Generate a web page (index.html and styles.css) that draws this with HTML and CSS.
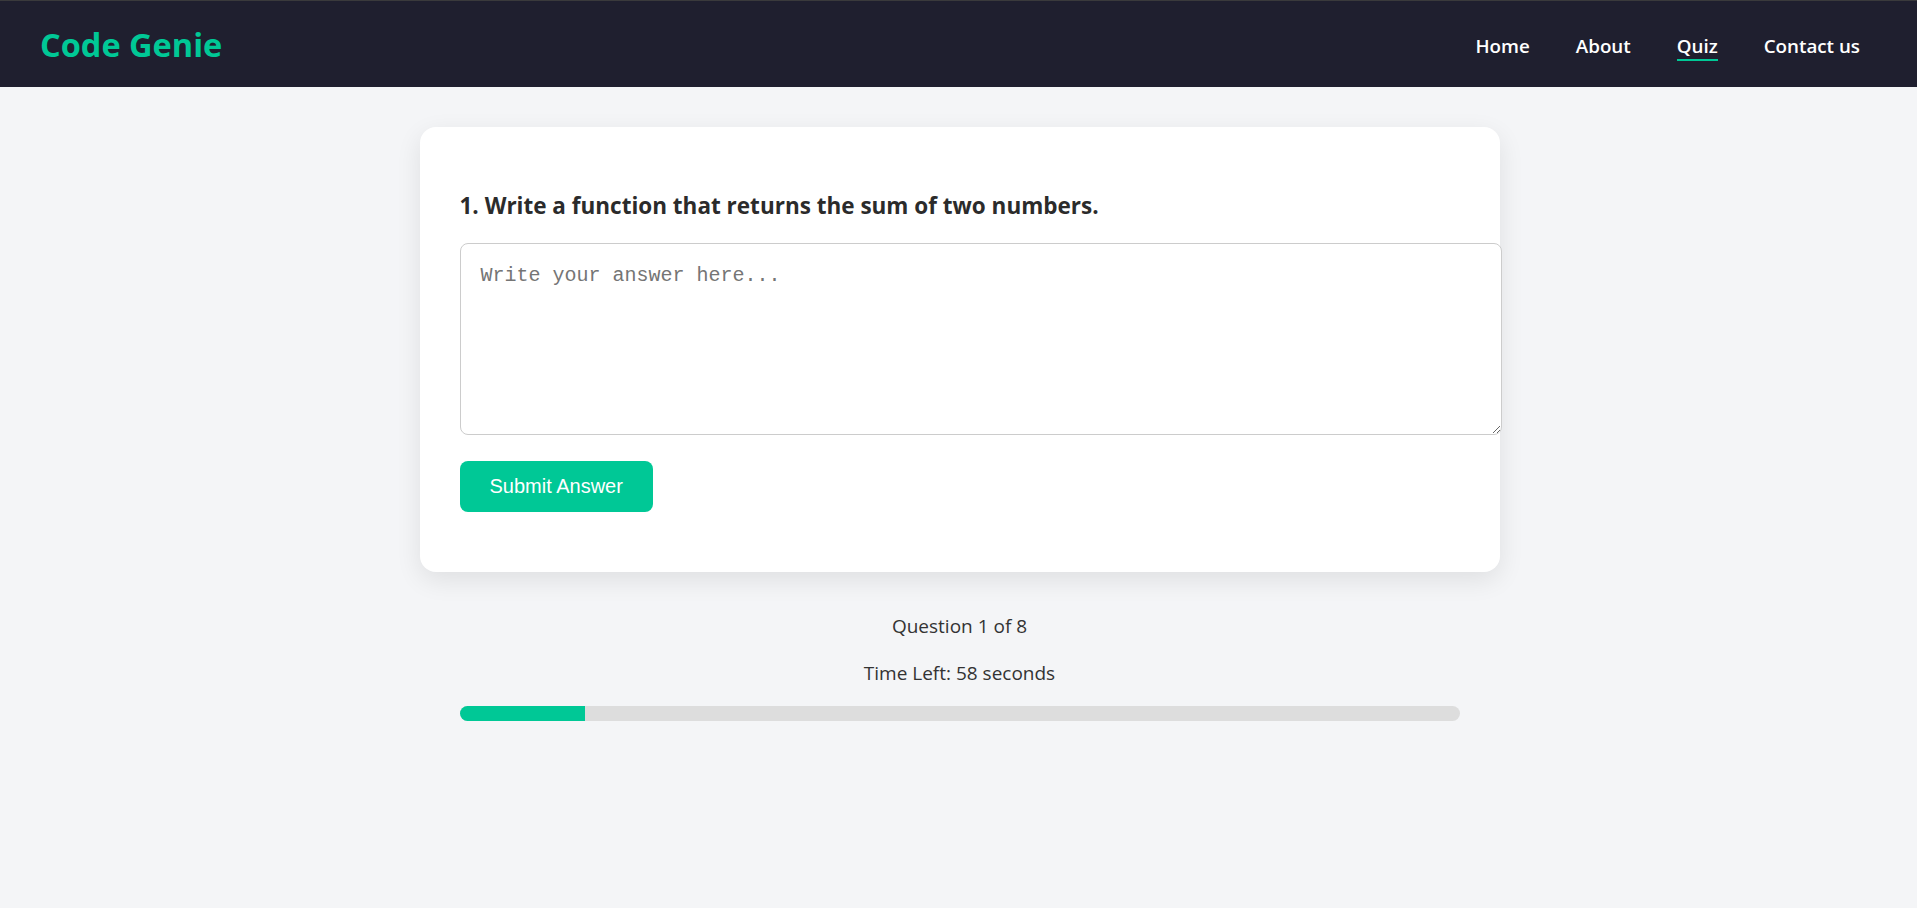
FILE: index.html
```html
<!DOCTYPE html>
<html lang="en">
<head>
<meta charset="utf-8">
<title>Code Genie - Quiz</title>
<link rel="stylesheet" href="styles.css">
</head>
<body>
<header class="navbar">
  <a class="logo" href="#">Code Genie</a>
  <nav class="nav-links">
    <a href="#">Home</a>
    <a href="#">About</a>
    <a href="#" class="active">Quiz</a>
    <a href="#">Contact us</a>
  </nav>
</header>
<main class="main">
  <section class="card">
    <h2 class="question">1. Write a function that returns the sum of two numbers.</h2>
    <textarea class="answer" placeholder="Write your answer here..."></textarea>
    <button class="submit" type="button">Submit Answer</button>
  </section>
  <div class="status">
    <p>Question 1 of 8</p>
    <p>Time Left: 58 seconds</p>
  </div>
  <div class="progress"><div class="progress-fill" style="width: 12.5%"></div></div>
</main>
</body>
</html>
```
FILE: styles.css
```css
* { box-sizing: content-box; }
body {
  margin: 0;
  background: #f4f5f7;
  font-family: "Open Sans", "Noto Sans", sans-serif;
  color: #333;
}
.navbar {
  height: 86px;
  border-top: 1px solid #3a3a3c;
  background: #1f1f2f;
  display: flex;
  align-items: center;
  justify-content: space-between;
  padding: 0 57px 0 40px;
}
.logo {
  color: #00c896;
  font-size: 32.5px;
  font-weight: 700;
  text-decoration: none;
}
.nav-links {
  display: flex;
  gap: 46px;
  padding-top: 5px;
}
.nav-links a {
  color: #fff;
  text-decoration: none;
  font-size: 18.8px;
  font-weight: 600;
  border-bottom: 2px solid transparent;
}
.nav-links a.active { border-bottom-color: #00c896; }
.main { padding: 40px 0 0 2px; }
.card {
  width: 1000px;
  margin: 0 auto;
  padding: 40px 40px 60px;
  background: #fff;
  border-radius: 16px;
  box-shadow: 0 8px 26px rgba(0, 0, 0, 0.09);
}
.question {
  font-size: 22.5px;
  font-weight: 700;
  color: #2b2b2b;
  margin: 23px 0 22px;
}
.answer {
  display: block;
  width: 100%;
  height: 150px;
  padding: 20px;
  border: 1px solid #ccc;
  border-radius: 8px;
  font-family: "Liberation Mono", monospace;
  font-size: 20px;
  margin: 0 0 26px;
  background: #fff;
}
.answer::placeholder { color: #757575; }
.submit {
  display: block;
  background: #00c896;
  color: #fff;
  border: none;
  border-radius: 8px;
  padding: 14px 30px;
  font-family: "Liberation Sans", Arial, sans-serif;
  font-size: 20px;
  line-height: 23px;
}
.status {
  text-align: center;
  margin-top: 41px;
  font-size: 19px;
}
.status p { margin: 0 0 21px; }
.status p:last-child { margin-bottom: 20px; }
.progress {
  width: 1000px;
  height: 15px;
  margin: 0 auto;
  background: #ddd;
  border-radius: 8px;
  overflow: hidden;
}
.progress-fill {
  height: 100%;
  background: #00c896;
}
```
